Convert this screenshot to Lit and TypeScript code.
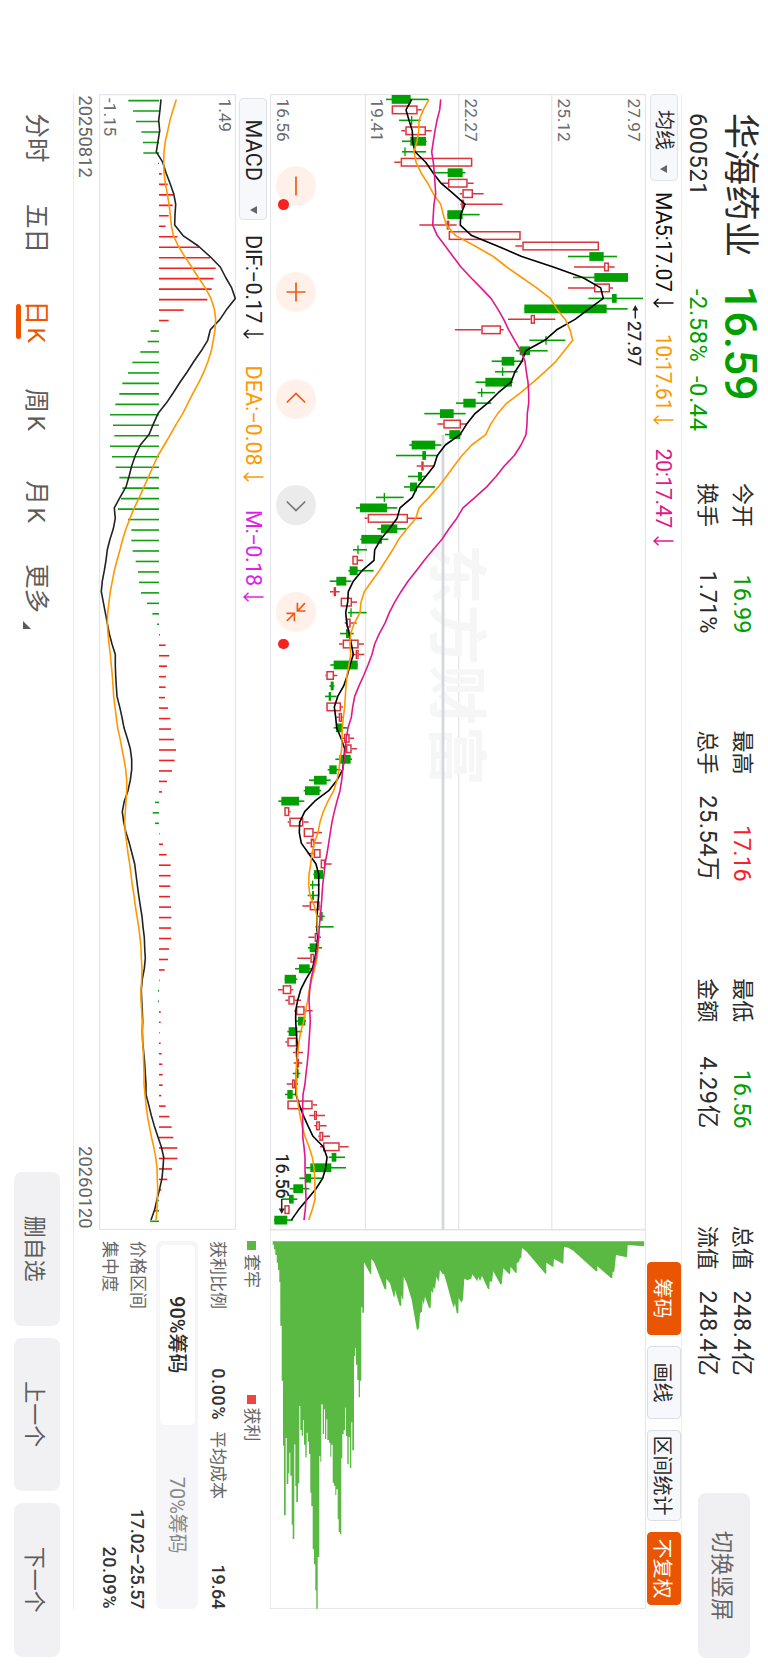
import { LitElement, html, svg, css } from "lit";
import { customElement } from "lit/decorators.js";

type Candle = [number, number, number, number, number];

// Price plot samples are stored in thirds of a pixel above PRICE_BASE: low, body start, body end, high, up(1)/down(0).
const CANDLES: Candle[] = [
  [378,395,452,505,0],[395,395,473,485,1],[417,453,457,482,0],[424,436,498,515,1],[426,451,498,500,0],
  [426,433,437,498,0],[403,422,637,637,1],[520,563,608,616,0],[545,564,623,641,1],[599,607,639,671,1],
  [601,604,612,728,1],[562,562,608,659,0],[478,560,568,590,1],[566,566,782,782,1],[766,787,1017,1017,1],
  [924,988,1031,1071,0],[942,1032,1047,1064,1],[939,1003,1104,1104,0],[924,1002,1050,1059,1],[985,1056,1070,1149,0],
  [793,793,1040,1103,0],[744,812,825,886,1],[585,664,723,731,1],[808,856,860,916,0],[768,779,810,863,0],
  [695,725,763,790,0],[705,726,730,773,0],[647,676,756,758,0],[653,663,667,705,0],[588,610,647,694,0],
  [493,540,581,617,0],[532,550,603,620,1],[555,568,601,605,0],[448,455,526,544,0],[408,487,498,535,0],
  [470,484,491,522,1],[444,474,486,497,0],[432,450,471,525,0],[348,371,375,431,0],[288,300,381,412,0],
  [314,323,444,486,1],[352,363,412,438,0],[301,304,366,385,0],[279,292,296,321,0],[277,277,294,309,1],
  [265,269,293,341,0],[209,229,259,274,0],[210,221,228,239,1],[242,242,276,291,1],[264,271,275,320,0],
  [254,259,272,290,1],[240,258,268,281,0],[237,248,296,312,1],[277,287,296,313,1],[211,221,293,293,0],
  [196,199,222,232,1],[208,212,221,223,0],[195,206,213,230,0],[199,199,243,249,1],[229,236,246,252,1],
  [221,228,246,262,0],[248,252,269,282,1],[256,258,275,291,1],[226,238,272,276,0],[203,208,230,242,0],
  [147,162,200,212,0],[131,135,179,183,0],[55,64,117,133,0],[73,73,88,92,1],[83,88,130,146,1],
  [131,131,161,186,1],[139,152,163,185,1],[143,161,182,182,1],[182,182,196,215,1],[160,162,189,190,0],
  [150,156,160,179,0],[143,156,162,175,0],[127,149,179,181,1],[169,179,188,194,0],[166,168,172,221,0],
  [145,164,177,183,1],[144,149,175,186,0],[112,151,163,166,1],[105,117,149,159,0],[74,74,108,112,0],
  [54,68,94,100,1],[76,85,104,123,1],[103,108,134,158,1],[106,114,136,138,0],[82,86,112,127,0],
  [76,82,111,115,1],[99,107,115,129,1],[101,109,117,127,1],[98,107,116,121,0],[80,96,106,114,1],
  [75,82,98,106,0],[82,82,158,171,1],[148,162,171,195,1],[163,168,180,200,1],[175,178,190,210,1],
  [180,189,239,266,1],[206,215,229,255,0],[137,151,214,258,0],[118,138,153,188,0],[89,100,129,148,0],
  [65,87,101,112,0],[73,73,89,89,1],[42,43,82,98,0],
];
const MA5 = [455,438,447,457,458,465,497,519,543,580,615,602,601,635,712,785,880,968,1022,1030,987,945,890,854,797,786,765,753,715,683,645,620,600,556,532,522,497,472,457,420,411,388,362,344,342,306,280,265,263,257,260,268,274,280,270,262,251,233,223,227,230,243,254,252,248,231,206,164,134,119,118,124,146,168,176,176,176,173,171,171,173,170,165,157,138,122,113,107,107,109,111,112,110,110,109,108,118,130,144,159,190,201,197,188,168,142,116,94];
const MA10 = [507,490,477,476,471,462,468,483,503,520,542,550,559,587,645,700,740,785,830,871,890,916,930,938,913,888,855,820,782,740,713,692,677,635,606,582,559,535,507,477,467,441,416,398,378,358,335,313,303,300,283,272,270,272,267,261,258,256,254,250,247,246,245,240,237,231,221,204,190,180,174,163,156,152,147,146,150,163,171,172,176,174,171,164,155,148,143,137,131,122,117,113,110,109,109,110,115,120,126,135,147,157,162,164,165,165,157,146];
const MA20 = [542,539,531,525,520,515,520,523,525,527,522,520,518,532,556,579,603,632,663,693,713,731,746,764,782,795,799,804,806,806,802,801,798,783,763,733,708,680,645,609,590,567,546,519,493,469,444,423,404,388,375,358,344,336,324,311,297,284,278,274,264,259,256,253,248,245,240,231,223,216,211,206,201,195,192,188,186,184,181,178,176,172,167,160,153,149,147,149,151,149,147,145,142,138,135,129,128,128,128,128,132,135,135,136,137,138,136,132];

// MACD samples, thirds of a pixel above MACD_BASE; the zero axis sits at 207.
const ZERO = 207;
const BARS = [115,129,138,154,159,160,204,215,233,249,248,236,227,262,328,360,377,371,365,352,281,236,182,173,151,127,114,97,88,76,60,69,73,60,66,77,88,97,93,84,114,124,124,128,137,144,147,153,171,187,201,210,227,238,231,228,227,225,234,241,243,252,258,254,246,231,216,195,188,195,209,219,230,242,242,241,240,243,244,243,243,237,234,224,209,204,204,212,212,209,212,215,217,218,218,214,227,238,245,250,262,262,246,232,214,200,195,180];
const DIF = [213,210,206,209,204,199,218,228,240,251,257,255,254,279,325,360,391,407,425,436,411,390,361,353,334,312,292,270,250,229,204,190,177,151,136,125,117,108,90,73,76,70,60,52,48,43,37,34,40,46,52,58,66,76,76,77,79,81,89,96,102,112,121,125,125,121,114,103,97,101,108,118,126,134,138,142,146,151,156,159,163,164,166,163,157,154,155,157,158,157,158,161,164,166,168,168,176,184,193,203,214,221,219,216,209,201,194,183];
const DEA = [259,249,240,233,226,222,221,222,226,232,237,241,244,250,265,284,305,325,346,363,373,377,375,370,364,354,342,327,310,294,278,259,241,223,204,190,176,162,148,133,120,108,98,90,81,73,67,61,57,53,52,54,57,61,64,67,69,71,75,79,83,90,96,102,107,110,110,108,106,104,106,110,114,119,123,127,132,136,141,146,150,153,154,156,155,153,153,155,157,157,158,160,161,162,162,165,168,172,178,184,191,197,201,202,203,202,201,198];

// Chip distribution: [upper edge of the price bin, volume], stepped.
const CHIP_STEPS: [number, number][] = [[42,74],[46,88],[50,105],[54,128],[58,150],[61,186],[65,317],[69,482],[72,677],[77,886],[80,654],[85,792],[88,760],[91,698],[95,767],[98,914],[103,957],[106,673],[109,798],[114,846],[118,790],[121,558],[125,630],[129,647],[132,600],[136,674],[140,712],[143,638],[147,665],[151,702],[154,818],[158,858],[162,988],[166,1033],[169,1111],[173,1166],[178,1011],[181,708],[184,725],[188,553],[192,642],[195,568],[199,657],[202,598],[207,660],[211,668],[214,710],[218,674],[222,788],[226,797],[229,825],[233,808],[236,898],[240,936],[244,943],[247,715],[251,642],[255,630],[258,563],[262,648],[266,733],[270,652],[274,744],[277,607],[282,691],[286,409],[288,384],[292,434],[296,480],[300,532],[304,482],[307,262],[312,278]];
const CHIP_SLOPE: [number, number][] = [[312,127],[331,162],[334,162],[334,117],[342,126],[374,208],[379,208],[379,177],[390,190],[401,230],[404,230],[405,210],[419,257],[424,257],[424,224],[427,237],[430,237],[431,170],[440,190],[455,240],[471,331],[477,325],[480,280],[486,275],[488,240],[491,255],[495,230],[507,264],[512,263],[514,212],[519,220],[521,200],[525,208],[529,170],[536,186],[540,150],[548,163],[552,162],[560,190],[575,245],[581,263],[585,250],[590,280],[595,280],[596,234],[604,248],[609,238],[613,176],[622,181],[634,176],[637,163],[652,184],[655,170],[660,184],[666,168],[684,207],[688,207],[689,184],[696,186],[700,154],[721,193],[725,193],[730,145],[745,160],[750,163],[752,140],[766,158],[770,158],[770,130],[777,125],[780,115],[784,113],[786,84],[800,95],[856,161],[859,161],[859,128],[880,142],[882,117],[910,132],[912,81],[925,83],[940,92],[1008,154],[1012,154],[1012,139],[1053,174],[1057,174],[1058,155],[1063,155],[1068,105],[1101,112],[1103,75],[1152,79],[1152,64]];

const PRICE_BASE = 508;
const MACD_BASE = 678;
const slotX = (i: number) => 99.4 + i * 10.474;
const priceY = (v: number) => PRICE_BASE - v / 3;
const macdY = (v: number) => MACD_BASE - v / 3;
const line = (values: number[], y: (v: number) => number) =>
  values.map((v, i) => `${slotX(i).toFixed(1)},${y(v).toFixed(1)}`).join(" ");

const chipOutline = () => {
  const depth = (v: number) => (1220 + v / 3).toFixed(1);
  const pts: string[] = [`${depth(64)},${priceY(38).toFixed(1)}`];
  let from = 38;
  for (const [to, v] of CHIP_STEPS) {
    pts.push(`${depth(v)},${priceY(from).toFixed(1)}`, `${depth(v)},${priceY(to).toFixed(1)}`);
    from = to;
  }
  for (const [at, v] of CHIP_SLOPE) pts.push(`${depth(v)},${priceY(at).toFixed(1)}`);
  return pts.join(" ");
};

const base = css`
  :host { display: block; box-sizing: border-box; }
  *, *::before, *::after { box-sizing: border-box; }
  svg { display: block; }
`;

@customElement("price-chart")
class PriceChart extends LitElement {
  static styles = [base, css`
    :host { position: relative; width: 1136px; height: 376px; font-family: Roboto, "Noto Sans CJK SC", sans-serif; }
    .axis { font-size: 17.2px; fill: #6c6c6c; }
    .mark { font-size: 18px; fill: #222; stroke: #222; stroke-width: .25; }
    .watermark { font: 700 60.5px "Noto Sans CJK SC", sans-serif; fill: #f6f6f7; }
    .tools { position: absolute; left: 71.7px; top: 330px; display: flex; gap: 66.6px; }
    .tool { position: relative; width: 40px; height: 40px; border: 0; padding: 0; border-radius: 50%; background: #fff1ea; color: #f05a14; }
    .tool.off { background: #ebebeb; color: #777; }
    .dot::after { content: ""; position: absolute; left: 33.3px; top: 27.6px; width: 10.6px; height: 10.6px; border-radius: 50%; background: #f52222; }
    .dot.far::after { left: 46.7px; }
  `];

  private candle([low, a, b, high, up]: Candle, i: number) {
    const x = slotX(i);
    const top = priceY(b), h = (b - a) / 3;
    if (!up) {
      return svg`<g fill="#00a000">
        <rect x=${x - 0.8} y=${priceY(high)} width="1.6" height=${(high - low) / 3}></rect>
        <rect x=${x - 4.4} y=${top} width="8.8" height=${h}></rect></g>`;
    }
    return svg`<g stroke="#d8363c" stroke-width="1.5" fill="none">
      <path d="M${x} ${priceY(high)}V${top}M${x} ${priceY(a)}V${priceY(low)}"></path>
      <rect x=${x - 3.8} y=${top + 0.7} width="7.6" height=${Math.max(h - 1.4, 0.8)}></rect></g>`;
  }

  render() {
    const axis: [string, number][] = [["27.97", 139.8], ["25.12", 209.8], ["22.27", 303.2], ["19.41", 397.2], ["16.56", 491]];
    return html`
      <svg width="1136" height="376" viewBox="94 122 1136 376">
        <g stroke="#e3e5eb" stroke-width="1.2" fill="none">
          <path d="M94 216.2H1230M94 309.3H1230M94 402.5H1230"></path>
          <rect x="94.6" y="122.5" width="1134.9" height="375"></rect>
        </g>
        <text class="watermark" x="544" y="333">东方财富</text>
        <path d="M435 325H1230" stroke="#d4d7de" stroke-width="2.8"></path>
        ${axis.map(([t, y]) => svg`<text class="axis" x="98.5" y=${y}>${t}</text>`)}
        ${CANDLES.map((c, i) => this.candle(c, i))}
        <g fill="none" stroke-width="1.6" stroke-linejoin="round">
          <polyline stroke="#000" points=${line(MA5, priceY)}></polyline>
          <polyline stroke="#ff9800" points=${line(MA10, priceY)}></polyline>
          <polyline stroke="#e0188c" points=${line(MA20, priceY)}></polyline>
        </g>
        <g class="mark">
          <text x="321" y="139.8">27.97</text>
          <text x="1153.5" y="492.3">16.56</text>
        </g>
        <g stroke="#222" stroke-width="1.5" fill="#222">
          <path d="M318.5 132.7H308"></path><path d="M305 132.7l5.5-3v6z" stroke="none"></path>
          <path d="M1199 486.3H1210"></path><path d="M1214 486.3l-5.5-3v6z" stroke="none"></path>
        </g>
      </svg>
      <div class="tools">
        ${this.tool("dot", "M10.5 20H29.5")}
        ${this.tool("", "M10.5 20H29.5M20 10.5V29.5")}
        ${this.tool("", "M23.5 10.8L14.5 20L23.5 29.2")}
        ${this.tool("off", "M16.5 10.8L25.5 20L16.5 29.2")}
        ${this.tool("dot far", "M11 19H19V11M11 11L18.5 18.5M29.5 22H21.5V30M29.5 30L22 22.5")}
      </div>`;
  }

  private tool(kind: string, d: string) {
    // The collapse glyph points its two arrowheads at the centre along the rising diagonal.
    const path = kind === "dot far" ? "M19 10.5V18.6H10.8M11.2 11L18.8 18.4M29.2 21.6H21.3V29.6M21.5 21.8L29 29.2" : d;
    return html`<button class="tool ${kind}"><svg width="40" height="40"><path d=${path} fill="none" stroke="currentColor" stroke-width="1.7"></path></svg></button>`;
  }
}

@customElement("macd-chart")
class MacdChart extends LitElement {
  static styles = [base, css`
    :host { width: 1136px; height: 137px; font-family: Roboto, sans-serif; }
    .axis { font-size: 17.2px; fill: #6c6c6c; }
  `];
  render() {
    return html`<svg width="1136" height="137" viewBox="94 532 1136 137">
      <rect x="94.6" y="532.5" width="1134.9" height="136" fill="none" stroke="#e3e5eb" stroke-width="1.3"></rect>
      <text class="axis" x="98.5" y="549">1.49</text>
      <text class="axis" x="98" y="664.5">-1.15</text>
      ${BARS.map((v, i) => svg`<path d="M${slotX(i) + 1.2} ${macdY(ZERO)}V${macdY(v)}" stroke=${v > ZERO ? "#f02020" : "#10a010"} stroke-width="1.6"></path>`)}
      <g fill="none" stroke-width="1.6" stroke-linejoin="round">
        <polyline stroke="#222" points=${line(DIF, macdY)}></polyline>
        <polyline stroke="#ff9800" points=${line(DEA, macdY)}></polyline>
      </g>
    </svg>`;
  }
}

@customElement("chip-chart")
class ChipChart extends LitElement {
  static styles = [base, css`:host { width: 379px; height: 376px; }`];
  render() {
    return html`<svg width="379" height="376" viewBox="1230 122 379 376">
      <rect x="1230" y="122.5" width="378.5" height="375.3" fill="none" stroke="#e6e7eb" stroke-width="1.2"></rect>
      <polygon points=${chipOutline()} fill="#5ab943"></polygon>
    </svg>`;
  }
}

@customElement("app-root")
class AppRoot extends LitElement {
  static styles = [base, css`
    :host { width: 768px; height: 1669px; overflow: hidden; background: #fff; }
    .stage {
      width: 1669px; height: 768px; display: flex; flex-direction: column;
      transform: translateX(768px) rotate(90deg); transform-origin: 0 0;
      font-family: Roboto, "Noto Sans CJK SC", sans-serif; color: #2b2b2b; line-height: 1; white-space: nowrap;
    }
    header { height: 86px; display: flex; align-items: flex-start; padding-left: 113px; }
    .quote { width: 370px; padding-top: 5.5px; }
    .first { display: flex; align-items: center; height: 44px; }
    .name { width: 172.5px; font-size: 36px; }
    .price { font-size: 45.2px; font-weight: 500; color: #00a000; }
    .second { display: flex; align-items: center; height: 42px; font-size: 23.6px; letter-spacing: .6px; padding-top: 1px; }
    .code { width: 176px; }
    .pct { width: 87px; }
    .down { color: #00a000; }
    .up { color: #f5222d; }
    .stats { display: grid; grid-template-columns: repeat(4, 150.5px); column-gap: 97.1px; grid-auto-rows: 34.5px; padding-top: 9px; width: 1010px; }
    .stat { display: flex; justify-content: space-between; align-items: center; font-size: 22px; }
    .stat b { font-weight: 400; font-size: 23.5px; }
    .stat .wide { letter-spacing: .55px; }
    .stat .tight { letter-spacing: -.6px; }
    .switch { width: 165px; height: 52px; margin-top: 18px; border: 0; border-radius: 8px; background: #f0f0f3; color: #666; font: 22.4px "Noto Sans CJK SC", sans-serif; padding: 0; }
    .bar { height: 36px; margin-left: 94px; width: 1515px; padding-right: 4px; border-top: 1.5px solid #ededf0; display: flex; align-items: center; font-size: 21.3px; }
    .select { display: flex; align-items: center; justify-content: space-between; height: 28px; width: 87px; padding: 0 7px 0 15px; border: 1px solid #dfe2e7; border-radius: 4px; background: #f7f8fb; font-size: 20px; }
    .caret { width: 0; height: 0; border: 4px solid transparent; border-top: 7.5px solid #666; border-bottom: 0; }
    .ind { display: flex; align-items: center; gap: 6px; letter-spacing: -.4px; }
    .ma5 { width: 142px; margin-left: 11px; color: #111; }
    .ma10 { width: 114.5px; gap: 5px; letter-spacing: -.8px; color: #ff9800; }
    .ma20 { gap: 8px; color: #e0188c; }
    .actions { display: flex; gap: 11px; margin-left: auto; }
    .action { height: 34px; width: 73px; border: 1px solid #dcdee4; border-radius: 4px; background: #f7f8fb; color: #2b2b2b; font: 20px "Noto Sans CJK SC", sans-serif; padding: 0; }
    .action.wide { width: 91px; }
    .action.on { background: #ea5504; border-color: #ea5504; color: #fff; }
    .row { display: flex; margin-left: 94px; }
    .left { width: 1136px; }
    .macdbar { height: 34px; display: flex; align-items: center; padding-left: 4px; font-size: 21.6px; }
    .macdbar .select { width: 122px; padding: 0 5px 0 20.5px; font-size: 21.5px; letter-spacing: .2px; color: #222; }
    .dif { margin-left: 15px; width: 130.5px; color: #222; }
    .dea { width: 144.5px; letter-spacing: 0; color: #ff9800; }
    .m { color: #e020e6; }
    .dates { display: flex; justify-content: space-between; height: 25px; padding: 5px 1.5px 0; font-size: 18.3px; color: #666; }
    .chips { width: 368px; margin-left: 11px; padding-top: 8px; font-size: 17px; color: #666; }
    .legend { display: flex; height: 22px; align-items: center; }
    .legend span { display: flex; align-items: center; gap: 4px; width: 153.5px; }
    .legend i { width: 9px; height: 9px; background: #5ab943; }
    .legend .gain { background: #ef4444; }
    .kv { display: flex; justify-content: space-between; align-items: center; height: 28px; }
    .kv b { font-weight: 500; font-size: 18px; color: #333; }
    .kv.double { height: 37.5px; margin: 4px 0 .5px; display: grid; grid-template-columns: 179px 178px; column-gap: 11px; }
    .kv div { display: flex; justify-content: space-between; align-items: center; }
    .kv .ratio { letter-spacing: .55px; }
    .kv .snug { letter-spacing: -.3px; }
    .seg { display: flex; height: 42px; padding: 3.5px; border-radius: 6px; background: #f6f6f9; font-size: 20px; color: #888; margin-bottom: 5px; }
    .seg div { flex: 1; display: flex; align-items: center; justify-content: center; border-radius: 5px; }
    .seg .on { background: #fff; color: #2b2b2b; font-weight: 500; }
    footer { display: flex; align-items: center; height: 74px; }
    .rule { margin-left: 94px; width: 1515px; border-top: 1.3px solid #e8e8ea; }
    nav { display: flex; margin-left: 113.5px; padding-top: 2px; width: 1058.5px; font-size: 24.5px; color: #5b5b5b; }
    .tab { position: relative; width: 90.5px; }
    .tab.t1 { width: 96.5px; } .tab.t2 { width: 88px; } .tab.t3 { width: 92px; } .tab.t4 { width: 83.5px; }
    .t2, .t3, .t4 { letter-spacing: 2.5px; }
    .tab.cur { color: #ee5500; }
    .tab.cur::after { content: ""; position: absolute; left: 3px; top: 26.5px; width: 35px; height: 5px; border-radius: 3px; background: #ee5500; }
    .more { position: absolute; left: 57px; top: 17px; }
    .btns { display: flex; gap: 12px; }
    .btn { width: 153.5px; height: 46px; border: 0; border-radius: 8px; background: #f1f1f4; color: #5b5b5b; font: 22px "Noto Sans CJK SC", sans-serif; padding: 0; }
  `];

  private arrow = html`<svg width="10" height="21" viewBox="0 0 10 21"><path d="M5 .5V20M.8 15.5L5 20L9.2 15.5" fill="none" stroke="currentColor" stroke-width="1.5"></path></svg>`;

  private stat(label: string, value: string, tone = "") {
    return html`<div class="stat"><span>${label}</span><b class=${tone}>${value}</b></div>`;
  }

  render() {
    return html`<div class="stage">
      <header>
        <div class="quote">
          <div class="first"><span class="name">华海药业</span><span class="price">16.59</span></div>
          <div class="second"><span class="code">600521</span><span class="pct down">-2.58%</span><span class="down">-0.44</span></div>
        </div>
        <div class="stats">
          ${this.stat("今开", "16.99", "down")}${this.stat("最高", "17.16", "up tight")}${this.stat("最低", "16.56", "down")}${this.stat("总值", "248.4亿", "wide")}
          ${this.stat("换手", "1.71%")}${this.stat("总手", "25.54万", "wide")}${this.stat("金额", "4.29亿", "wide")}${this.stat("流值", "248.4亿", "wide")}
        </div>
        <button class="switch">切换竖屏</button>
      </header>
      <div class="bar">
        <div class="select">均线<i class="caret"></i></div>
        <span class="ind ma5">MA5:17.07${this.arrow}</span>
        <span class="ind ma10">10:17.61${this.arrow}</span>
        <span class="ind ma20">20:17.47${this.arrow}</span>
        <div class="actions">
          <button class="action on">筹码</button><button class="action">画线</button>
          <button class="action wide">区间统计</button><button class="action on">不复权</button>
        </div>
      </div>
      <div class="row"><price-chart></price-chart><chip-chart></chip-chart></div>
      <div class="row">
        <div class="left">
          <div class="macdbar">
            <div class="select">MACD<i class="caret"></i></div>
            <span class="ind dif">DIF:−0.17${this.arrow}</span>
            <span class="ind dea">DEA:−0.08${this.arrow}</span>
            <span class="ind m">M:−0.18${this.arrow}</span>
          </div>
          <macd-chart></macd-chart>
          <div class="dates"><span>20250812</span><span>20260120</span></div>
        </div>
        <div class="chips">
          <div class="legend"><span><i></i>套牢</span><span><i class="gain"></i>获利</span></div>
          <div class="kv double"><div>获利比例<b class="ratio">0.00%</b></div><div>平均成本<b class="snug">19.64</b></div></div>
          <div class="seg"><div class="on">90%筹码</div><div>70%筹码</div></div>
          <div class="kv">价格区间<b class="snug">17.02–25.57</b></div>
          <div class="kv">集中度<b class="ratio">20.09%</b></div>
        </div>
      </div>
      <div class="rule"></div>
      <footer>
        <nav>
          <span class="tab">分时</span><span class="tab t1">五日</span><span class="tab cur t2">日K</span>
          <span class="tab t3">周K</span><span class="tab t4">月K</span>
          <span class="tab">更多<svg class="more" width="8" height="8"><path d="M8 0V8H0z" fill="#5b5b5b"></path></svg></span>
        </nav>
        <div class="btns"><button class="btn">删自选</button><button class="btn">上一个</button><button class="btn">下一个</button></div>
      </footer>
    </div>`;
  }
}
